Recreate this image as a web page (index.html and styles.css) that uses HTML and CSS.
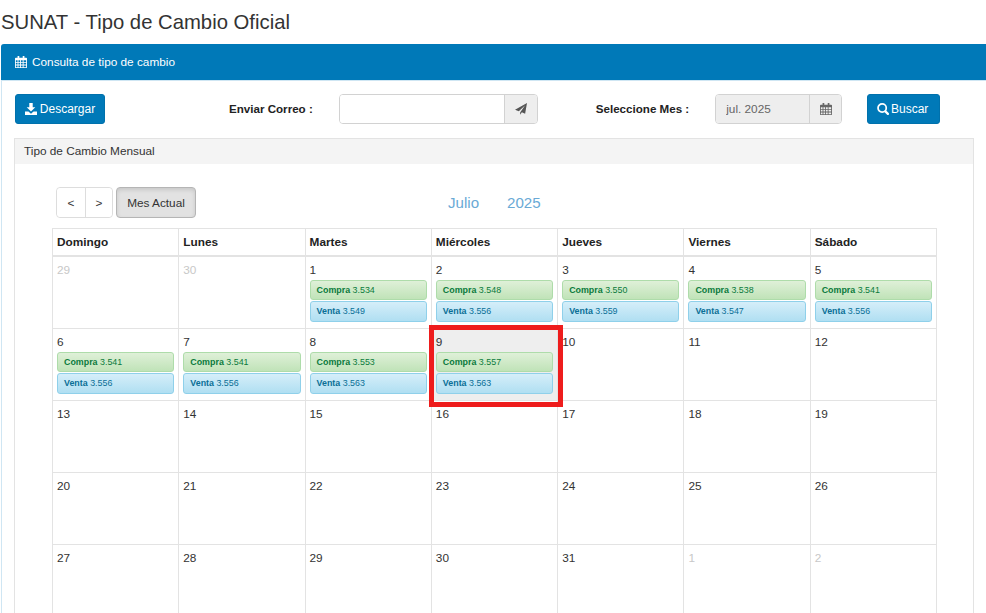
FILE: index.html
```html
<!DOCTYPE html>
<html lang="es">
<head>
    <meta charset="UTF-8">
    <title>SUNAT - Tipo de Cambio Oficial</title>
    <link rel="stylesheet" href="styles.css">
</head>
<body>
    <svg class="sprites" width="0" height="0">
        <symbol id="ic-cal" viewBox="0 0 14 14">
            <path fill="currentColor" fill-rule="evenodd" d="M3 0h2v2h4V0h2v2h2a1 1 0 0 1 1 1v10a1 1 0 0 1-1 1H1a1 1 0 0 1-1-1V3a1 1 0 0 1 1-1h2zM1 5v2h2V5zm3 0v2h2V5zm3 0v2h2V5zm3 0v2h3V5zM1 8v2h2V8zm3 0v2h2V8zm3 0v2h2V8zm3 0v2h3V8zM1 11v2h2v-2zm3 0v2h2v-2zm3 0v2h2v-2zm3 0v2h3v-2z"/>
        </symbol>
    </svg>

    <h1 class="page-title">SUNAT - Tipo de Cambio Oficial</h1>

    <div class="panel">
        <div class="panel-head">
            <svg class="icon"><use href="#ic-cal"/></svg>
            <span>Consulta de tipo de cambio</span>
        </div>
        <div class="panel-body">
            <div class="toolbar">
                <button class="btn btn-blue btn-down">
                    <svg class="icon" viewBox="0 0 14 14"><path fill="currentColor" d="M5 0h4v5h3L7 10 2 5h3zM0 10h4l3 2.500 3-2.500h4v4H0z"/></svg>
                    Descargar
                </button>
                <label class="lbl lbl-mail">Enviar Correo :</label>
                <div class="input-group mail-group">
                    <input type="text" class="field">
                    <span class="addon">
                        <svg class="icon" viewBox="0 0 14 14"><path fill="#555" d="M14 0 11.800 12.500 8 10.900 6 13.700V11L11.600 3 4.400 9.700 0 8z"/></svg>
                    </span>
                </div>
                <label class="lbl lbl-month">Seleccione Mes :</label>
                <div class="input-group month-group">
                    <input type="text" class="field field-off" value="jul. 2025" disabled>
                    <span class="addon addon-month">
                        <svg class="icon icon-dark"><use href="#ic-cal"/></svg>
                    </span>
                </div>
                <button class="btn btn-blue btn-find">
                    <svg class="icon" viewBox="0 0 14 14"><path fill="none" stroke="currentColor" stroke-width="2" d="M6 1a4.800 4.800 0 1 0 0 9.600A4.800 4.800 0 0 0 6 1z"/><path stroke="currentColor" stroke-width="2.600" stroke-linecap="round" d="M9.800 9.800 12.700 12.700"/></svg>
                    Buscar
                </button>
            </div>

            <div class="inner">
                <div class="inner-head">Tipo de Cambio Mensual</div>
                <div class="inner-body">
                    <div class="cal-bar">
                        <div class="cal-nav">
                            <button class="nav-btn">&lt;</button><button class="nav-btn">&gt;</button>
                        </div>
                        <button class="today-btn">Mes Actual</button>
                        <div class="cal-title"><span>Julio</span><span>2025</span></div>
                    </div>
                    <div class="cal" id="cal"></div>
                </div>
            </div>
        </div>
    </div>

    <script>
        var days = ["Domingo", "Lunes", "Martes", "Miércoles", "Jueves", "Viernes", "Sábado"];
        var rates = {
            1: ["3.534", "3.549"], 2: ["3.548", "3.556"], 3: ["3.550", "3.559"],
            4: ["3.538", "3.547"], 5: ["3.541", "3.556"], 6: ["3.541", "3.556"],
            7: ["3.541", "3.556"], 8: ["3.553", "3.563"], 9: ["3.557", "3.563"]
        };
        var cells = [[29, 1], [30, 1]];
        for (var d = 1; d <= 31; d++) cells.push([d, 0]);
        cells.push([1, 1], [2, 1]);

        var html = "";
        days.forEach(function (name) {
            html += '<div class="cal-head">' + name + "</div>";
        });
        cells.forEach(function (c) {
            var n = c[0], off = c[1];
            var r = !off && rates[n];
            var today = !off && n === 9;
            html += '<div class="cal-cell' + (today ? " is-today" : "") + '">';
            html += '<div class="num' + (off ? " num-off" : "") + '">' + n + "</div>";
            if (r) {
                html += '<div class="ev ev-buy"><b>Compra</b> ' + r[0] + "</div>";
                html += '<div class="ev ev-sell"><b>Venta</b> ' + r[1] + "</div>";
            }
            if (today) html += '<div class="mark"></div>';
            html += "</div>";
        });
        document.getElementById("cal").innerHTML = html;
    </script>
</body>
</html>
```

FILE: styles.css
```css
html, body {
    height: 613px;
    overflow: hidden;
}

body {
    margin: 0;
    background: #ffffff;
    color: #333333;
    font-family: "Liberation Sans", Arial, sans-serif;
    font-size: 11.8px;
}

.sprites {
    display: block;
    height: 0;
}

.page-title {
    margin: 0;
    padding: 11px 0 0 1px;
    height: 44px;
    box-sizing: border-box;
    font-size: 20.3px;
    line-height: 23px;
    font-weight: normal;
    color: #333333;
}

.icon {
    width: 12px;
    height: 12px;
    flex: none;
}

.panel {
    margin-left: 1px;
    border-left: 1px solid #cfe6f3;
    border-radius: 3px 0 0 0;
}

.panel-head {
    height: 36px;
    margin-left: -1px;
    display: flex;
    align-items: center;
    gap: 5px;
    padding-left: 14px;
    background: #0079b8;
    border-bottom: 1px solid #cfe6f3;
    color: #ffffff;
    border-radius: 3px 0 0 0;
}

.panel-body {
    padding: 13px 12px 0 12px;
}

.toolbar {
    display: flex;
    align-items: center;
    height: 30px;
}

.btn {
    height: 30px;
    box-sizing: border-box;
    display: flex;
    align-items: center;
    justify-content: center;
    gap: 3px;
    padding: 0;
    border: 1px solid #0071ac;
    border-radius: 3px;
    font-family: inherit;
    font-size: 12px;
}

.btn-blue {
    background: #0079b8;
    color: #ffffff;
}

.btn-down {
    width: 90px;
    margin-left: 1px;
}

.btn-find {
    width: 73px;
    margin-left: 25px;
    padding-right: 2px;
    gap: 2px;
}

.lbl {
    font-size: 11.6px;
    font-weight: bold;
    color: #222222;
    padding-bottom: 2px;
}

.lbl-mail {
    margin-left: 124px;
}

.lbl-month {
    margin-left: 58px;
}

.input-group {
    display: flex;
    height: 30px;
    box-sizing: border-box;
    border: 1px solid #d2d2d2;
    border-radius: 4px;
    overflow: hidden;
}

.mail-group {
    width: 199px;
    margin-left: 26px;
}

.month-group {
    width: 127px;
    margin-left: 26px;
}

.field {
    flex: 1;
    min-width: 0;
    box-sizing: border-box;
    padding: 0 10px;
    border: 0;
    outline: none;
    background: #ffffff;
    font-family: inherit;
    font-size: 11.8px;
    color: #555555;
}

.field-off {
    background: #eeeeee;
    color: #666666;
}

.addon {
    width: 32px;
    display: flex;
    align-items: center;
    justify-content: center;
    border-left: 1px solid #d2d2d2;
    background: #eeeeee;
}

.addon-month {
    width: 31px;
}

.icon-dark {
    color: #666666;
}

.inner {
    margin-top: 14px;
    border: 1px solid #e3e3e3;
    border-bottom: 0;
}

.inner-head {
    height: 25px;
    padding-left: 9px;
    background: #f4f4f4;
    line-height: 25px;
    color: #333333;
}

.inner-body {
    padding: 23px 36px 0 37px;
}

.cal-bar {
    display: flex;
    align-items: center;
    height: 31px;
    margin-left: 4px;
}

.cal-nav {
    display: flex;
    border: 1px solid #dddddd;
    border-radius: 4px;
    height: 31px;
    box-sizing: border-box;
}

.nav-btn {
    width: 28px;
    padding: 0;
    border: 0;
    background: #ffffff;
    border-radius: 4px;
    font-family: inherit;
    font-size: 11.8px;
    color: #333333;
}

.nav-btn + .nav-btn {
    width: 27px;
    border-left: 1px solid #dddddd;
    border-radius: 0 4px 4px 0;
}

.today-btn {
    height: 31px;
    width: 80px;
    margin-left: 3px;
    padding: 0;
    border: 1px solid #b5b5b5;
    border-radius: 4px;
    background: #e2e2e2;
    box-shadow: inset 0 2px 4px rgba(0, 0, 0, 0.12);
    font-family: inherit;
    font-size: 11.8px;
    color: #333333;
}

.cal-title {
    display: flex;
    gap: 28px;
    margin-left: 252px;
    font-size: 15.1px;
    color: #6aaad6;
}

.cal {
    display: grid;
    grid-template-columns: repeat(7, 1fr);
    grid-template-rows: 28px repeat(5, 72px);
    margin-top: 10px;
    border-left: 1px solid #e3e3e3;
    border-top: 1px solid #e3e3e3;
}

.cal-head {
    box-sizing: border-box;
    padding: 6px 0 0 4px;
    border-right: 1px solid #e3e3e3;
    border-bottom: 2px solid #e3e3e3;
    font-weight: bold;
    color: #222222;
}

.cal-cell {
    position: relative;
    box-sizing: border-box;
    padding: 6px 4px 0 4px;
    border-right: 1px solid #e3e3e3;
    border-bottom: 1px solid #e3e3e3;
}

.is-today {
    background: #eeeeee;
}

.num {
    height: 16px;
    line-height: 14px;
    color: #333333;
}

.num-off {
    color: #c8c8c8;
}

.ev {
    box-sizing: border-box;
    height: 21px;
    margin-top: 1px;
    padding-left: 6px;
    border-radius: 3px;
    font-size: 8.9px;
    line-height: 18px;
}

.ev b {
    font-weight: bold;
}

.ev-buy {
    height: 20px;
    border: 1px solid #aedcaa;
    background: linear-gradient(#dff0d8, #c0e3b8);
    color: #0a7a3c;
}

.ev-sell {
    border: 1px solid #8fd0ea;
    background: linear-gradient(#d5eef9, #b0dff2);
    color: #0a6f96;
}

.mark {
    position: absolute;
    z-index: 1;
    left: -3px;
    top: -4px;
    width: 134px;
    height: 82px;
    box-sizing: border-box;
    border: 5px solid #ee1c1c;
}
```
